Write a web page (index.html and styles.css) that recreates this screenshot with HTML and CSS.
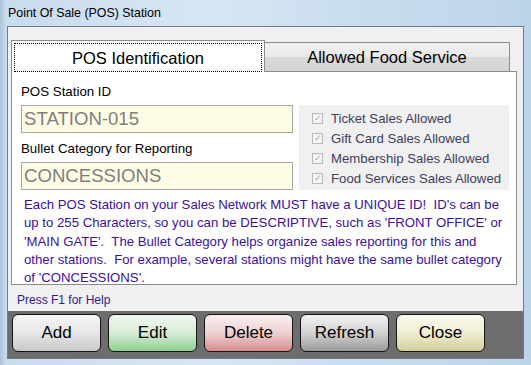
FILE: index.html
```html
<!DOCTYPE html>
<html>
<head>
<meta charset="utf-8">
<link rel="stylesheet" href="styles.css">
</head>
<body>
<div class="window">
  <div class="titlebar">Point Of Sale (POS) Station</div>
  <div class="client">
    <div class="tabs">
      <div class="tabstrip">
        <div class="tab active"><span class="focus">POS Identification</span></div>
        <div class="tab">Allowed Food Service</div>
      </div>
      <div class="panel">
        <div class="toprow">
          <div class="fields">
            <div class="label">POS Station ID</div>
            <div class="input">STATION-015</div>
            <div class="label second">Bullet Category for Reporting</div>
            <div class="input">CONCESSIONS</div>
          </div>
          <div class="checks">
            <div class="check"><span class="box">&#10003;</span>Ticket Sales Allowed</div>
            <div class="check"><span class="box">&#10003;</span>Gift Card Sales Allowed</div>
            <div class="check"><span class="box">&#10003;</span>Membership Sales Allowed</div>
            <div class="check"><span class="box">&#10003;</span>Food Services Sales Allowed</div>
          </div>
        </div>
        <p class="desc">Each POS Station on your Sales Network MUST have a UNIQUE ID!&nbsp; ID's can be<br>up to 255 Characters, so you can be DESCRIPTIVE, such as 'FRONT OFFICE' or<br>'MAIN GATE'.&nbsp; The Bullet Category helps organize sales reporting for this and<br>other stations.&nbsp; For example, several stations might have the same bullet category<br>of 'CONCESSIONS'.</p>
      </div>
    </div>
    <div class="help">Press F1 for Help</div>
    <div class="buttonbar">
      <button class="btn add">Add</button>
      <button class="btn edit">Edit</button>
      <button class="btn delete">Delete</button>
      <button class="btn refresh">Refresh</button>
      <button class="btn close">Close</button>
    </div>
  </div>
</div>
</body>
</html>
```

FILE: styles.css
```css
* { box-sizing: border-box; }
html, body { margin: 0; padding: 0; }
body {
  width: 531px;
  height: 365px;
  overflow: hidden;
  font-family: "Liberation Sans", Arial, sans-serif;
}
.window {
  width: 531px;
  height: 365px;
  padding: 0 7px 6px 7px;
  display: flex;
  flex-direction: column;
  background: linear-gradient(90deg, #a9c3db 0px, #c9dcec 6px, #d7e6f3 40%, #c8dcee 70%, #bcd4ea 100%);
}
.titlebar {
  height: 26px;
  flex: none;
  font-size: 12.4px;
  line-height: 14px;
  padding: 6px 0 0 1px;
  color: #000;
}
.client {
  flex: 1;
  border: 1px solid #6f7c89;
  background: #f0f0f0;
  display: flex;
  flex-direction: column;
}
.tabs {
  padding: 13px 5px 0 3px;
}
.tabstrip {
  display: flex;
  height: 32px;
  align-items: flex-end;
  position: relative;
  z-index: 1;
  margin-bottom: -1px;
}
.tab {
  font-size: 16.5px;
  color: #000;
  display: flex;
  align-items: center;
  justify-content: center;
}
.tab.active {
  width: 254px;
  height: 32px;
  background: #fff;
  border: 1px solid #898c95;
  border-bottom: none;
  padding: 2px 2px 0 2px;
}
.focus {
  width: 100%;
  height: 100%;
  border: 1px dotted #000;
  display: flex;
  align-items: center;
  justify-content: center;
  padding-top: 1px;
}
.tab:not(.active) {
  width: 246px;
  height: 30px;
  margin-left: -1px;
  border: 1px solid #898c95;
  border-bottom: 1px solid #898c95;
  background: linear-gradient(180deg, #f0f0f0 0%, #e9e9e9 48%, #dadada 52%, #d3d3d3 100%);
}
.panel {
  width: 506px;
  height: 214px;
  background: #fff;
  border: 1px solid #898c95;
  padding: 0 0 0 9px;
}
.toprow {
  display: flex;
  padding-top: 12px;
}
.fields {
  width: 272px;
}
.label {
  font-size: 13.3px;
  line-height: 16px;
  height: 21px;
  color: #000;
}
.label.second { margin-top: 8px; }
.input {
  height: 28px;
  border: 1px solid #a6a6a6;
  background: #fffce6;
  color: #7f7f7f;
  font-size: 18.6px;
  line-height: 26px;
  padding-left: 2px;
}
.checks {
  margin-left: 6px;
  margin-top: 21px;
  width: 210px;
  height: 85px;
  background: #f0f0f0;
  padding: 3px 0 0 13px;
}
.check {
  height: 20px;
  font-size: 13.2px;
  color: #3e3e5e;
  display: flex;
  align-items: center;
}
.box {
  width: 11px;
  height: 11px;
  border: 1px solid #b9b9b9;
  background: #f4f4f4;
  color: #a8a8a8;
  font-size: 9px;
  line-height: 9px;
  text-align: center;
  margin-right: 8px;
}
.desc {
  margin: 6px 0 0 3px;
  font-size: 13.2px;
  line-height: 18.3px;
  color: #3a10a0;
}
.help {
  height: 26px;
  font-size: 12px;
  color: #2e1a8c;
  padding: 8px 0 0 9px;
}
.buttonbar {
  flex: 1;
  background: #6d6d6d;
  display: flex;
  gap: 7px;
  padding: 3px 0 0 4px;
}
.btn {
  width: 89px;
  height: 38px;
  border: 1px solid #151515;
  border-radius: 6px;
  font-family: "Liberation Sans", Arial, sans-serif;
  font-size: 17px;
  color: #000;
  padding: 0;
}
.add { background: linear-gradient(180deg, #f6f6f6 0%, #e6e6e6 50%, #c9c9c9 100%); }
.edit { background: linear-gradient(180deg, #f2f8f2 0%, #d6ecd6 50%, #8fd08f 100%); }
.delete { background: linear-gradient(180deg, #faeeee 0%, #eed2d2 50%, #d68c8c 100%); }
.refresh { background: linear-gradient(180deg, #f2f2f2 0%, #d2d2d2 50%, #9a9a9a 100%); }
.close { background: linear-gradient(180deg, #fbfbf0 0%, #efedd2 50%, #d3cf98 100%); }
```
